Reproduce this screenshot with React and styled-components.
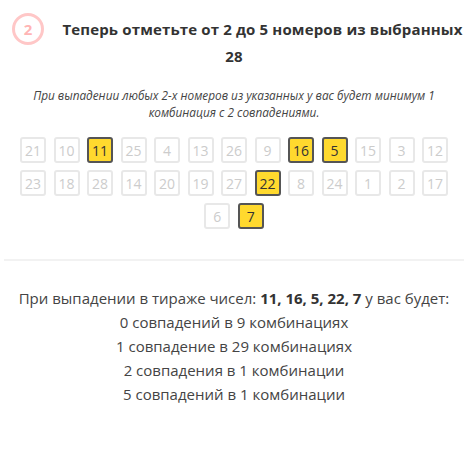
import styled, { createGlobalStyle } from "styled-components";

const GlobalStyle = createGlobalStyle`
  body {
    margin: 0;
    background: #fff;
    font-family: "Open Sans", "Noto Sans", sans-serif;
    color: #444;
  }
`;

const ALL = [21, 10, 11, 25, 4, 13, 26, 9, 16, 5, 15, 3, 12, 23, 18, 28, 14, 20, 19, 27, 22, 8, 24, 1, 2, 17, 6, 7];
const PICKED = [11, 16, 5, 22, 7];

const RESULTS = [
  "0 совпадений в 9 комбинациях",
  "1 совпадение в 29 комбинациях",
  "2 совпадения в 1 комбинации",
  "5 совпадений в 1 комбинации",
];

const App = () => {
  return (
    <Wrapper>
      <GlobalStyle />
      <Header>
        <Step>2</Step>
        <Title>Теперь отметьте от 2 до 5 номеров из выбранных 28</Title>
      </Header>
      <Hint>
        При выпадении любых 2-х номеров из указанных у вас будет минимум 1
        комбинация с 2 совпадениями.
      </Hint>
      <Numbers>
        {ALL.map((n) => (
          <Ball key={n} $active={PICKED.includes(n)}>
            {n}
          </Ball>
        ))}
      </Numbers>
      <Divider />
      <Result>
        <p>
          При выпадении в тираже чисел: <b>{PICKED.join(", ")}</b> у вас будет:
        </p>
        {RESULTS.map((r) => (
          <p key={r}>{r}</p>
        ))}
      </Result>
    </Wrapper>
  );
};

export default App;

const Wrapper = styled.div`
  padding: 0 10px 0 4px;
`;

const Header = styled.div`
  padding-top: 13px;
  overflow: hidden;
`;

const Step = styled.div`
  float: left;
  display: flex;
  align-items: center;
  justify-content: center;
  box-sizing: border-box;
  width: 32px;
  height: 32px;
  margin: 0 17px -6px 8px;
  border: 3px solid #ffc7c7;
  border-radius: 50%;
  color: #ffb5b5;
  font-size: 15px;
  font-weight: 700;
`;

const Title = styled.h2`
  margin: 0;
  padding-top: 3px;
  text-align: center;
  font-size: 15px;
  letter-spacing: 0.15px;
  font-weight: 700;
  line-height: 27px;
  color: #333;
`;

const Hint = styled.p`
  margin: 17px 0 0;
  text-align: center;
  font-size: 11.8px;
  font-style: italic;
  line-height: 17px;
  color: #444;
`;

const Numbers = styled.div`
  display: flex;
  flex-wrap: wrap;
  justify-content: center;
  gap: 7px 7.5px;
  width: 428px;
  margin: 16px auto 0;
`;

const Ball = styled.div`
  display: flex;
  align-items: center;
  justify-content: center;
  box-sizing: border-box;
  width: 26px;
  height: 26px;
  border: 2px solid ${({ $active }) => ($active ? "#555" : "#e8e8e8")};
  border-radius: 3px;
  background: ${({ $active }) => ($active ? "#ffd92e" : "#fff")};
  color: ${({ $active }) => ($active ? "#333" : "#ccc")};
  font-size: 14px;
`;

const Divider = styled.div`
  height: 2px;
  margin-top: 30px;
  background: #f2f2f2;
`;

const Result = styled.div`
  margin-top: 25px;
  text-align: center;
  font-size: 15px;
  line-height: 24px;
  color: #444;

  p {
    margin: 0;
  }

  b {
    color: #333;
  }
`;
